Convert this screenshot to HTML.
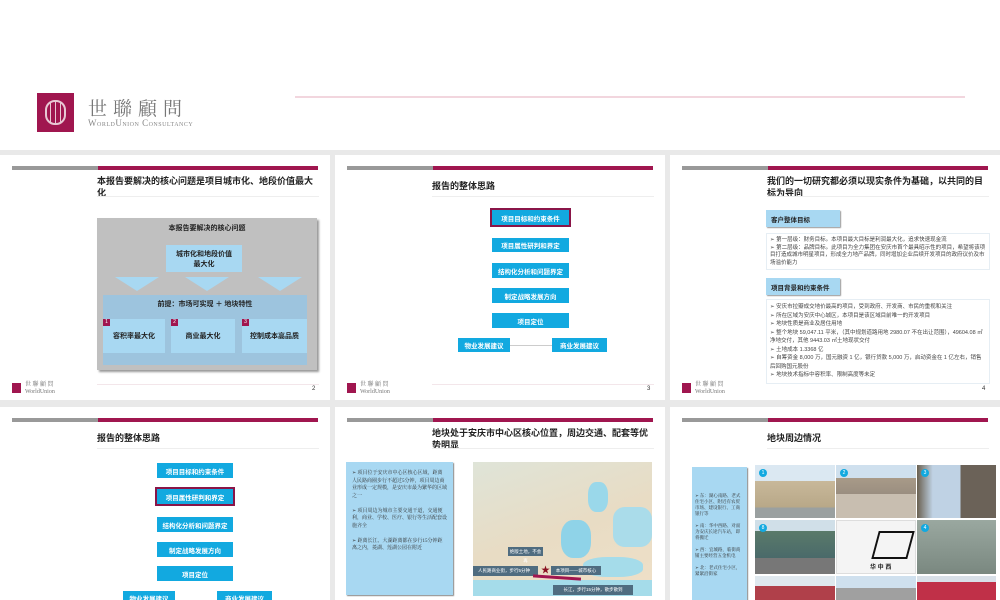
<!DOCTYPE html>
<html><head><meta charset="utf-8"><style>
*{margin:0;padding:0;box-sizing:border-box}
html,body{width:1000px;height:600px;overflow:hidden}
body{background:#fff;font-family:"Liberation Sans","Noto Sans CJK SC",sans-serif;position:relative}
.a{position:absolute}
.grid{position:absolute;left:0;top:150px;width:1000px;height:450px;background:#e9e9e9}
.s{position:absolute;width:330px;height:245px;background:#fff;overflow:hidden}
.bg{position:absolute;left:12px;top:11px;width:86px;height:4px;background:#999}
.bp{position:absolute;left:98px;top:11px;width:220px;height:4px;background:#a0164f}
.t{position:absolute;left:97px;top:20px;width:222px;font-size:9px;font-weight:bold;color:#222;line-height:12px}
.sep{position:absolute;left:97px;top:41px;width:222px;height:1px;background:#eee}
.fl{position:absolute;left:12px;top:228px;width:9px;height:10px;background:#a0164f}
.ft{position:absolute;left:25px;top:227px;font-size:6px;color:#777;font-family:"Liberation Serif","Noto Serif CJK SC",serif;line-height:7px}
.pn{position:absolute;left:312px;top:231px;font-size:6px;color:#333}
.fline{position:absolute;left:97px;top:229px;width:222px;height:1px;background:#f3e6ea}
.bx{position:absolute;background:#12a9e0;color:#fff;font-size:6.5px;font-weight:bold;text-align:center;display:flex;align-items:center;justify-content:center}
.hl{outline:2px solid #8a1548}
.lb{background:#a8d8f2;color:#222;font-weight:bold;font-size:7px;display:flex;align-items:center;justify-content:center;position:absolute;text-align:center}
.li{font-size:5.5px;color:#444;line-height:7.5px}
</style></head><body>
<div class="a" style="left:37px;top:93px;width:37px;height:39px;background:#a0164f"></div>
<div class="a" style="left:45px;top:100px;width:21px;height:25px;border:2px solid #e8c8d4;border-radius:10px"></div>
<div class="a" style="left:50px;top:102px;width:1px;height:21px;background:#e8c8d4"></div>
<div class="a" style="left:55px;top:101px;width:1px;height:23px;background:#e8c8d4"></div>
<div class="a" style="left:60px;top:102px;width:1px;height:21px;background:#e8c8d4"></div>
<div class="a" style="left:88px;top:94px;font-size:19px;letter-spacing:6px;color:#777;font-family:'Liberation Serif','Noto Serif CJK TC',serif">世聯顧問</div>
<div class="a" style="left:88px;top:118px;font-size:9px;letter-spacing:0.5px;color:#888;font-family:'Liberation Serif',serif;font-variant:small-caps">WorldUnion Consultancy</div>
<div class="a" style="left:295px;top:96px;width:670px;height:2px;background:#f2d6de"></div>
<div class="grid"></div>

<div class="s" style="left:0;top:155px">
<div class="bg"></div><div class="bp"></div>
<div class="t">本报告要解决的核心问题是项目城市化、地段价值最大化</div><div class="sep"></div>
<div class="a" style="left:97px;top:63px;width:220px;height:152px;background:#c0c0c0;box-shadow:2px 2px 2px #999"></div>
<div class="a" style="left:97px;top:68px;width:220px;text-align:center;font-size:7px;font-weight:bold;color:#222">本报告要解决的核心问题</div>
<div class="lb" style="left:166px;top:90px;width:76px;height:27px;font-size:7px">城市化和地段价值<br>最大化</div>
<div class="a" style="left:115px;top:122px;width:0;height:0;border-left:22px solid transparent;border-right:22px solid transparent;border-top:14px solid #a8d8f2"></div>
<div class="a" style="left:185px;top:122px;width:0;height:0;border-left:22px solid transparent;border-right:22px solid transparent;border-top:14px solid #a8d8f2"></div>
<div class="a" style="left:258px;top:122px;width:0;height:0;border-left:22px solid transparent;border-right:22px solid transparent;border-top:14px solid #a8d8f2"></div>
<div class="a" style="left:103px;top:140px;width:204px;height:70px;background:#9dc4de"></div>
<div class="a" style="left:103px;top:144px;width:204px;text-align:center;font-size:7px;font-weight:bold;color:#222">前提：市场可实现 ＋ 地块特性</div>
<div class="lb" style="left:103px;top:164px;width:62px;height:34px">容积率最大化</div>
<div class="lb" style="left:171px;top:164px;width:64px;height:34px">商业最大化</div>
<div class="lb" style="left:242px;top:164px;width:65px;height:34px">控制成本高品质</div>
<div class="a" style="left:103px;top:164px;width:7px;height:7px;background:#a0164f;color:#fff;font-size:5px;text-align:center;line-height:7px">1</div>
<div class="a" style="left:171px;top:164px;width:7px;height:7px;background:#a0164f;color:#fff;font-size:5px;text-align:center;line-height:7px">2</div>
<div class="a" style="left:242px;top:164px;width:7px;height:7px;background:#a0164f;color:#fff;font-size:5px;text-align:center;line-height:7px">3</div>
<div class="fline"></div><div class="fl"></div><div class="ft">世 聯 顧 問<br>WorldUnion</div><div class="pn">2</div>
</div>

<div class="s" style="left:335px;top:155px">
<div class="bg"></div><div class="bp"></div>
<div class="t" style="top:25px">报告的整体思路</div><div class="sep"></div>
<div class="bx hl" style="left:157px;top:55px;width:77px;height:15px">项目目标和约束条件</div>
<div class="bx" style="left:157px;top:83px;width:77px;height:14px">项目属性研判和界定</div>
<div class="bx" style="left:157px;top:108px;width:77px;height:15px">结构化分析和问题界定</div>
<div class="bx" style="left:157px;top:133px;width:77px;height:15px">制定战略发展方向</div>
<div class="bx" style="left:157px;top:158px;width:77px;height:15px">项目定位</div>
<div class="bx" style="left:123px;top:183px;width:52px;height:14px">物业发展建议</div>
<div class="bx" style="left:217px;top:183px;width:55px;height:14px">商业发展建议</div>
<div class="a" style="left:175px;top:190px;width:42px;height:1px;background:#ccc"></div>
<div class="fline"></div><div class="fl"></div><div class="ft">世 聯 顧 問<br>WorldUnion</div><div class="pn">3</div>
</div>

<div class="s" style="left:670px;top:155px">
<div class="bg"></div><div class="bp"></div>
<div class="t">我们的一切研究都必须以现实条件为基础，以共同的目标为导向</div><div class="sep"></div>
<div class="lb" style="left:96px;top:55px;width:74px;height:17px;justify-content:flex-start;padding-left:5px;font-size:6.5px;box-shadow:1px 1px 1px #999">客户整体目标</div>
<div class="a li" style="left:96px;top:78px;width:224px;height:37px;border:1px solid #e6eef4;padding:3px">➢ 第一层级：财务目标。本项目最大目标是利润最大化，追求快速现金流<br>➢ 第二层级：品牌目标。此项目为全力集团在安庆市首个最具昭示性的项目，希望将该项目打造成城市明星项目，形成全力地产品牌，同时增加企业后续开发项目的政府议价及市场溢价能力</div>
<div class="lb" style="left:96px;top:123px;width:74px;height:17px;justify-content:flex-start;padding-left:5px;font-size:6.5px;box-shadow:1px 1px 1px #999">项目背景和约束条件</div>
<div class="a li" style="left:96px;top:144px;width:224px;height:85px;border:1px solid #e6eef4;padding:3px;line-height:8.5px">➢ 安庆市拉瓣成交地价最高的项目，受到政府、开发商、市民的重视和关注<br>➢ 所在区域为安庆中心城区，本项目是该区域目前唯一的开发项目<br>➢ 地块性质是商业及居住用地<br>➢ 整个地块 59,047.11 平米，（其中规划道路用地 2980.07 不在出让范围），49604.08 ㎡净地交付，其他 9443.03 ㎡土地现状交付<br>➢ 土地成本 1.3368 亿<br>➢ 自筹资金 8,000 万，国元融资 1 亿，银行贷款 5,000 万，启动资金在 1 亿左右，销售后回购国元股份<br>➢ 地块技术指标中容积率、限制高度等未定</div>
<div class="fl"></div><div class="ft">世 聯 顧 問<br>WorldUnion</div><div class="pn">4</div>
</div>

<div class="s" style="left:0;top:407px;height:200px">
<div class="bg"></div><div class="bp"></div>
<div class="t" style="top:25px">报告的整体思路</div><div class="sep"></div>
<div class="bx" style="left:157px;top:56px;width:76px;height:15px">项目目标和约束条件</div>
<div class="bx hl" style="left:157px;top:82px;width:76px;height:15px">项目属性研判和界定</div>
<div class="bx" style="left:157px;top:110px;width:76px;height:15px">结构化分析和问题界定</div>
<div class="bx" style="left:157px;top:135px;width:76px;height:15px">制定战略发展方向</div>
<div class="bx" style="left:157px;top:159px;width:76px;height:15px">项目定位</div>
<div class="bx" style="left:123px;top:184px;width:52px;height:14px">物业发展建议</div>
<div class="bx" style="left:217px;top:184px;width:55px;height:14px">商业发展建议</div>
</div>

<div class="s" style="left:335px;top:407px;height:200px">
<div class="bg"></div><div class="bp"></div>
<div class="t">地块处于安庆市中心区核心位置，周边交通、配套等优势明显</div><div class="sep"></div>
<div class="a" style="left:11px;top:55px;width:107px;height:133px;background:#a8d8f2;box-shadow:1px 1px 1px #888;padding:8px 6px;font-size:5px;line-height:7.5px;color:#333;font-family:'Liberation Serif','Noto Serif CJK SC',serif">➢ 项目位于安庆市中心区核心区域，距离人民路商圈步行不超过5分钟，项目周边商业形成一定规模，是安庆市最为繁华的区域之一<br><br>➢ 项目周边为城市主要交通干道，交通便利，商业、学校、医疗、银行等生活配套设施齐全<br><br>➢ 距离长江、大湖距离都在步行15分钟距离之内，菱湖、莲湖公园在附近</div>
<div class="a" style="left:138px;top:55px;width:179px;height:134px;background:#e8dcc4;overflow:hidden">
<div class="a" style="left:0;top:0;width:179px;height:134px;background:linear-gradient(160deg,#dfe4d8 0%,#e8dcc4 50%,#efe0c8 100%)"></div>
<div class="a" style="left:88px;top:58px;width:30px;height:38px;background:#8fd3e8;border-radius:40%"></div>
<div class="a" style="left:110px;top:95px;width:60px;height:20px;background:#a5dcea;border-radius:40%"></div>
<div class="a" style="left:115px;top:20px;width:20px;height:30px;background:#9ad8ea;border-radius:40%"></div>
<div class="a" style="left:140px;top:45px;width:39px;height:40px;background:#aadcea;border-radius:30%"></div>
<div class="a" style="left:0;top:118px;width:179px;height:16px;background:#a5dcea"></div>
<div class="a" style="left:35px;top:85px;width:35px;height:9px;background:#4f6c80;color:#fff;font-size:4.5px;text-align:center;line-height:9px">绝版土地，不会再</div>
<div class="a" style="left:-3px;top:104px;width:68px;height:10px;background:#4f6c80;color:#fff;font-size:4.5px;text-align:center;line-height:10px">人民路商业街，步行5分钟</div>
<div class="a" style="left:78px;top:104px;width:50px;height:9px;background:#4f6c80;color:#fff;font-size:4.5px;text-align:center;line-height:9px">本项目——城市核心</div>
<div class="a" style="left:80px;top:123px;width:80px;height:10px;background:#4f6c80;color:#fff;font-size:4.5px;text-align:center;line-height:10px">长江，步行15分钟，散步散到</div>
<div class="a" style="left:60px;top:114px;width:48px;height:3px;background:#a0164f;transform:rotate(4deg)"></div>
<div class="a" style="left:68px;top:101px;font-size:9px;color:#8a1020">★</div>
</div>
</div>

<div class="s" style="left:670px;top:407px;height:200px">
<div class="bg"></div><div class="bp"></div>
<div class="t" style="top:25px">地块周边情况</div><div class="sep"></div>
<div class="a" style="left:22px;top:60px;width:55px;height:140px;background:#a8d8f2;box-shadow:1px 1px 1px #888;padding:26px 3px;font-size:4.5px;line-height:6px;color:#333;font-family:'Liberation Serif','Noto Serif CJK SC',serif">➢ 东：湖心南路、老式住宅小区、附近有农贸市场、建设银行、工商银行等<br><br>➢ 南：华中西路、对面为安庆长途汽车站，即将搬迁<br><br>➢ 西：宜城路，临街商铺主要经营五金机电<br><br>➢ 北：老式住宅小区，紧紧沿街家</div>
<div class="a" style="left:85px;top:58px;width:80px;height:53px;background:linear-gradient(#dbe8f2 30%,#c8b89a 30%,#b8a888 80%,#9aa0a0 80%)"></div>
<div class="a" style="left:166px;top:58px;width:80px;height:53px;background:linear-gradient(#cfe0ee 25%,#a89a88 25%,#9a8e80 55%,#c8beb0 55%)"></div>
<div class="a" style="left:247px;top:58px;width:79px;height:53px;background:linear-gradient(90deg,#6a6050 0%,#bfd2e4 20%,#bfd2e4 55%,#6b6258 55%);"></div>
<div class="a" style="left:85px;top:113px;width:80px;height:54px;background:linear-gradient(#d0dfe8 20%,#5a7a6a 20%,#4a6a6a 70%,#777 70%)"></div>
<div class="a" style="left:166px;top:113px;width:80px;height:54px;background:#f4f4f4;border:1px solid #ddd"></div>
<div class="a" style="left:205px;top:124px;width:36px;height:28px;border:2px solid #111;transform:skew(-15deg)"></div>
<div class="a" style="left:247px;top:113px;width:79px;height:54px;background:linear-gradient(#9aa8a0,#7a8880)"></div>
<div class="a" style="left:85px;top:169px;width:80px;height:40px;background:linear-gradient(#dfe8ee 25%,#b0404a 25%)"></div>
<div class="a" style="left:166px;top:169px;width:80px;height:40px;background:linear-gradient(#cfe0ee 30%,#a0a0a0 30%)"></div>
<div class="a" style="left:247px;top:169px;width:79px;height:40px;background:linear-gradient(#d8e0e8 15%,#c03048 15%)"></div>
<div class="a" style="left:89px;top:62px;width:8px;height:8px;border-radius:50%;background:#12a9e0;color:#fff;font-size:5px;text-align:center;line-height:8px">1</div>
<div class="a" style="left:170px;top:62px;width:8px;height:8px;border-radius:50%;background:#12a9e0;color:#fff;font-size:5px;text-align:center;line-height:8px">2</div>
<div class="a" style="left:251px;top:62px;width:8px;height:8px;border-radius:50%;background:#12a9e0;color:#fff;font-size:5px;text-align:center;line-height:8px">3</div>
<div class="a" style="left:89px;top:117px;width:8px;height:8px;border-radius:50%;background:#12a9e0;color:#fff;font-size:5px;text-align:center;line-height:8px">8</div>
<div class="a" style="left:251px;top:117px;width:8px;height:8px;border-radius:50%;background:#12a9e0;color:#fff;font-size:5px;text-align:center;line-height:8px">4</div>
<div class="a" style="left:200px;top:155px;font-size:6px;font-weight:bold;color:#222">华 中 西</div>
</div>
</body></html>
